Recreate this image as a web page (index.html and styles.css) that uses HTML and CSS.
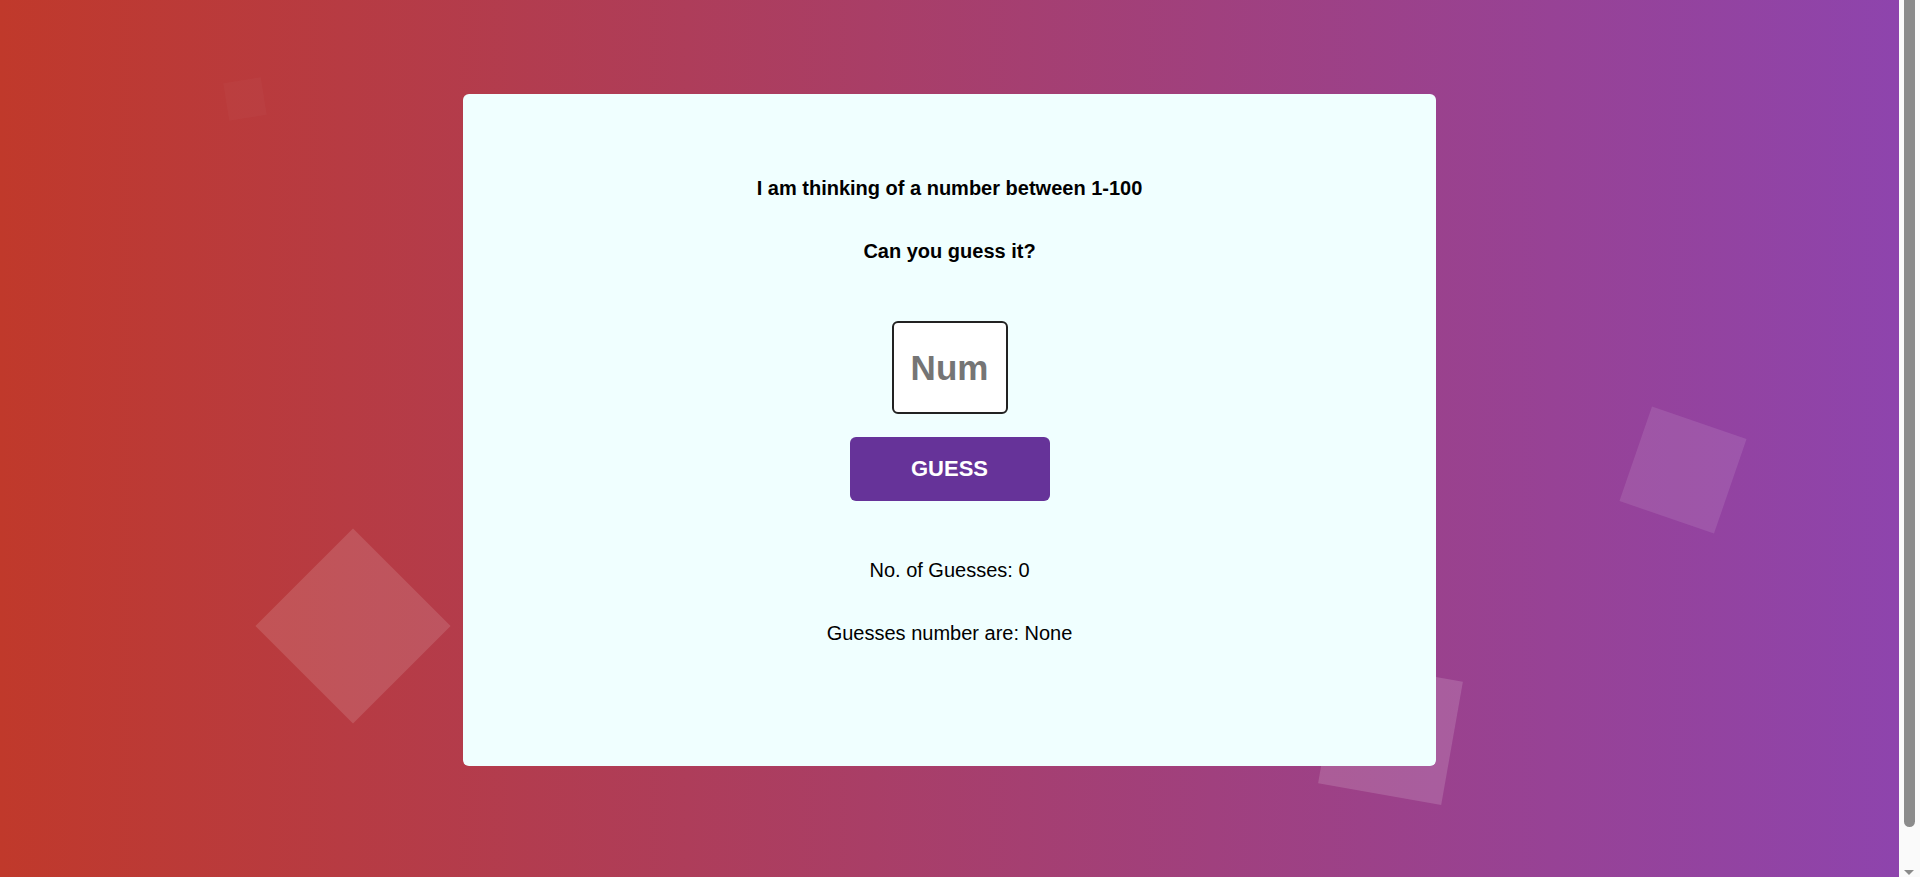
FILE: index.html
```html
<!DOCTYPE html>
<html lang="en">
<head>
<meta charset="utf-8">
<title>Guess the Number</title>
<link rel="stylesheet" href="styles.css">
</head>
<body>
<div class="stage">
  <div class="bg-shapes" aria-hidden="true">
    <span class="shape shape-1"></span>
    <span class="shape shape-2"></span>
    <span class="shape shape-3"></span>
    <span class="shape shape-4"></span>
  </div>
  <main class="page">
    <section class="card">
      <h3 class="title">I am thinking of a number between 1-100</h3>
      <h3 class="subtitle">Can you guess it?</h3>
      <input class="guess-input" type="text" inputmode="numeric" placeholder="Num">
      <button class="guess-btn" type="button">GUESS</button>
      <p class="stat stat-count">No. of Guesses: 0</p>
      <p class="stat stat-list">Guesses number are: None</p>
    </section>
  </main>
</div>
<div class="scrollbar" aria-hidden="true">
  <div class="scrollbar-thumb"></div>
  <div class="scrollbar-arrow"></div>
</div>
</body>
</html>
```
FILE: styles.css
```css
* { box-sizing: border-box; }

html, body {
  margin: 0;
  padding: 0;
}

html { background: #fafafa; }

body {
  font-family: "Liberation Sans", Arial, sans-serif;
  color: #000;
  overflow: hidden;
}

.stage {
  position: relative;
  margin-right: 21px;
  height: 100vh;
  background: linear-gradient(to right, #c0392b, #8e44ad);
  overflow: hidden;
}

.bg-shapes {
  position: absolute;
  inset: 0;
  z-index: 0;
}

.shape {
  position: absolute;
  display: block;
  background: #fff;
}

.shape-1 { left: 226px; top: 80px; width: 38px; height: 38px; transform: rotate(-9deg); opacity: 0.025; }
.shape-2 { left: 284px; top: 557px; width: 138px; height: 138px; transform: rotate(45deg); opacity: 0.13; }
.shape-3 { left: 1633px; top: 420px; width: 100px; height: 100px; transform: rotate(19deg); opacity: 0.1; }
.shape-4 { left: 1328px; top: 670px; width: 125px; height: 125px; transform: rotate(10deg); opacity: 0.15; }

.page {
  position: relative;
  z-index: 1;
  display: flex;
  justify-content: center;
  padding-top: 94px;
}

.card {
  width: 973px;
  height: 672px;
  background: #f0ffff;
  border-radius: 6px;
  display: flex;
  flex-direction: column;
  align-items: center;
  padding-top: 83px;
}

.title, .subtitle {
  margin: 0;
  font-size: 20px;
  font-weight: bold;
  line-height: 23px;
}

.subtitle { margin-top: 40px; }

.guess-input {
  margin-top: 58px;
  width: 116px;
  height: 93px;
  border: 2px solid #222;
  border-radius: 6px;
  background: #fff;
  font-family: "Liberation Sans", Arial, sans-serif;
  font-size: 35px;
  font-weight: bold;
  text-align: center;
  color: #000;
  padding: 0 4px;
  outline: none;
}

.guess-input::placeholder {
  color: #757575;
}

.guess-btn {
  margin-top: 23px;
  width: 200px;
  height: 64px;
  border: none;
  border-radius: 6px;
  background: #663399;
  color: #fff;
  font-family: "Liberation Sans", Arial, sans-serif;
  font-size: 22px;
  font-weight: bold;
  cursor: pointer;
}

.stat {
  margin: 0;
  font-size: 20px;
  line-height: 23px;
}

.stat-count { margin-top: 58px; }
.stat-list { margin-top: 40px; }

.scrollbar {
  position: fixed;
  top: 0;
  right: 0;
  width: 21px;
  height: 100vh;
  background: #fafafa;
}

.scrollbar-thumb {
  position: absolute;
  left: 5px;
  top: 0;
  width: 11px;
  height: 827px;
  background: #8b8b8b;
  border-radius: 0 0 6px 6px;
}

.scrollbar-arrow {
  position: absolute;
  left: 5px;
  top: 870px;
  width: 0;
  height: 0;
  border-left: 5px solid transparent;
  border-right: 5px solid transparent;
  border-top: 5px solid #8b8b8b;
}
```
